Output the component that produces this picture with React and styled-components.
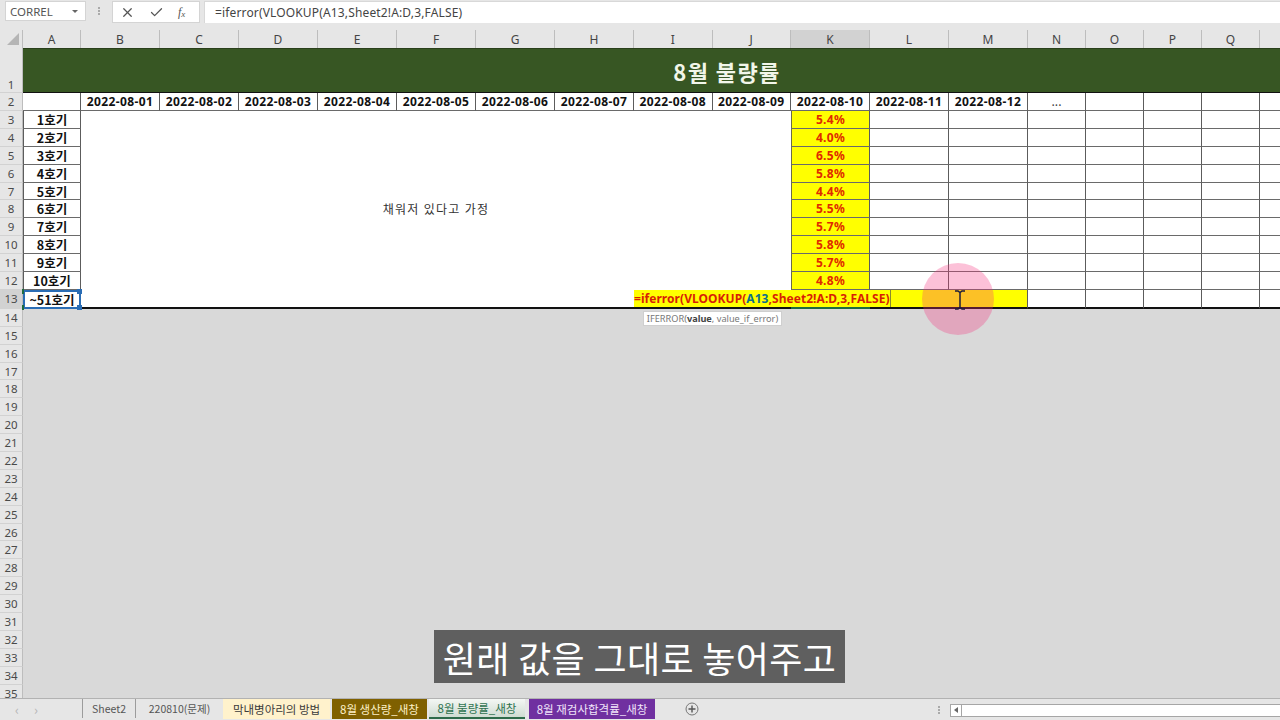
import styled, { createGlobalStyle } from 'styled-components';
import { FiX, FiCheck } from 'react-icons/fi';

const GlobalStyle = createGlobalStyle`
    html, body {
        margin: 0;
        padding: 0;
        background: #d9d9d9;
    }
    * {
        box-sizing: border-box;
    }
`;

const columns = [
    ['A', 58], ['B', 79], ['C', 79], ['D', 79], ['E', 79], ['F', 79], ['G', 79], ['H', 79], ['I', 78.5],
    ['J', 78.5], ['K', 79], ['L', 79], ['M', 79], ['N', 58], ['O', 58], ['P', 58], ['Q', 58], ['', 58],
];
const dates = ['01', '02', '03', '04', '05', '06', '07', '08', '09', '10', '11', '12'];
const rates = ['5.4%', '4.0%', '6.5%', '5.8%', '4.4%', '5.5%', '5.7%', '5.8%', '5.7%', '4.8%'];
const lowerRows = Array.from({ length: 22 }, (_, i) => i + 14);
const template = `23px ${columns.map((c) => `${c[1]}px`).join(' ')}`;

export default function App() {
    return (
        <Page>
            <GlobalStyle />
            <FormulaRow>
                <NameBox>
                    CORREL
                    <Caret />
                </NameBox>
                <Dots />
                <ActionBox>
                    <FiX size={15} />
                    <FiCheck size={15} />
                    <FxLabel>f<sub>x</sub></FxLabel>
                </ActionBox>
                <FormulaInput>=iferror(VLOOKUP(A13,Sheet2!A:D,3,FALSE)</FormulaInput>
            </FormulaRow>

            <Sheet>
                <Corner><CornerMark /></Corner>
                {columns.map((c) => (
                    <ColHead key={c[0]} $active={c[0] === 'K'}>{c[0]}</ColHead>
                ))}

                <RowNum $tall>1</RowNum>
                <TitleBand>8월 불량률</TitleBand>

                <RowNum>2</RowNum>
                <DateCell />
                {dates.map((d) => (
                    <DateCell key={d}>2022-08-{d}</DateCell>
                ))}
                <PlainCell $dots>...</PlainCell>
                <PlainCell />
                <PlainCell />
                <PlainCell />
                <PlainCell />

                <Merged>채워저 있다고 가정</Merged>
                {rates.map((rate, i) => (
                    <Row key={i} rowNo={i + 3} label={`${i + 1}호기`} rate={rate} />
                ))}

                <RowNum $active>13</RowNum>
                <SelectedCell>
                    ~51호기
                    <Handle $top $right />
                    <Handle $right />
                    <Handle $left $top $green />
                    <Handle $left $green />
                </SelectedCell>
                <EditCell>
                    <EditText>
                        =iferror(VLOOKUP(<RefText>A13</RefText>,Sheet2!A:D,3,FALSE)
                    </EditText>
                    <Tooltip>
                        IFERROR(<b>value</b>, value_if_error)
                    </Tooltip>
                </EditCell>
                <LastRowCell />
                <LastRowCell />
                <LastRowCell />
                <LastRowCell />
                <LastRowCell />

                <GrayArea />
                <KMark />
                {lowerRows.map((n) => (
                    <RowNum key={n}>{n}</RowNum>
                ))}
            </Sheet>

            <PointerHalo />
            <IBeam width="12" height="20" viewBox="0 0 12 20">
                <path d="M1 1h3l2 1.5L8 1h3M6 2.5v15M1 19h3l2-1.5L8 19h3" fill="none" stroke="#1c1c3a" strokeWidth="1.5" />
            </IBeam>
            <Caption>원래 값을 그대로 놓어주고</Caption>

            <TabBar>
                <NavArrows>
                    <span>‹</span>
                    <span>›</span>
                </NavArrows>
                <PlainTab $w={53}>Sheet2</PlainTab>
                <PlainTab $w={88}>220810(문제)</PlainTab>
                <ColorTab $bg="#fff2cc" $color="#3a3a3a" $w={107}>막내병아리의 방법</ColorTab>
                <ColorTab $bg="#7f6000" $color="#fdf0c8" $w={95}>8월 생산량_새창</ColorTab>
                <ActiveTab>8월 불량률_새창</ActiveTab>
                <ColorTab $bg="#7030a0" $color="#f0e4fa" $w={126}>8월 재검사합격률_새창</ColorTab>
                <AddSheet>
                    <svg width="14" height="14" viewBox="0 0 14 14">
                        <circle cx="7" cy="7" r="6" fill="none" stroke="#777" strokeWidth="1" />
                        <path d="M7 3.5v7M3.5 7h7" stroke="#555" strokeWidth="1.4" />
                    </svg>
                </AddSheet>
                <BarDots />
                <ScrollTrack>
                    <ScrollButton />
                </ScrollTrack>
            </TabBar>
        </Page>
    );
}

function Row({ rowNo, label, rate }) {
    return (
        <>
            <RowNum>{rowNo}</RowNum>
            <LabelCell>{label}</LabelCell>
            <RateCell>{rate}</RateCell>
            {[0, 1, 2, 3, 4, 5, 6].map((n) => (
                <PlainCell key={n} />
            ))}
        </>
    );
}

const Page = styled.div`
    width: 1280px;
    height: 720px;
    position: relative;
    overflow: hidden;
    display: flex;
    flex-direction: column;
    background: #d9d9d9;
    font-family: "Noto Sans", "Noto Sans CJK KR", sans-serif;
`;

const FormulaRow = styled.div`
    height: 30px;
    flex-shrink: 0;
    display: flex;
    align-items: flex-start;
    padding-top: 1px;
    padding-left: 5px;
    background: #e6e6e6;
`;

const NameBox = styled.div`
    width: 81px;
    height: 20px;
    padding: 0 5px 0 4px;
    display: flex;
    align-items: center;
    justify-content: space-between;
    background: #fff;
    border: 1px solid #d4d4d4;
    font-size: 11.5px;
    color: #555;
`;

const Caret = styled.span`
    width: 0;
    height: 0;
    margin-right: 2px;
    border-left: 3px solid transparent;
    border-right: 3px solid transparent;
    border-top: 3px solid #666;
`;

const Dots = styled.div`
    width: 2px;
    height: 8px;
    margin: 6px 12px 0 12px;
    background: repeating-linear-gradient(#aaa 0 2px, transparent 2px 3px);
`;

const ActionBox = styled.div`
    width: 88px;
    height: 22px;
    padding-left: 7px;
    margin-right: 4px;
    display: flex;
    align-items: center;
    gap: 14px;
    background: #fff;
    border: 1px solid #d4d4d4;
    color: #555;
`;

const FxLabel = styled.span`
    font-family: "Liberation Serif", serif;
    font-style: italic;
    font-size: 12px;
    line-height: 1;
    color: #555;

    sub {
        font-size: 9px;
        vertical-align: -1px;
    }
`;

const FormulaInput = styled.div`
    flex: 1;
    height: 22px;
    padding-left: 10px;
    display: flex;
    align-items: center;
    background: #fff;
    border-top: 1px solid #d8d8d8;
    border-left: 1px solid #d8d8d8;
    font-size: 12px;
    letter-spacing: 0.15px;
    color: #444;
`;

const Sheet = styled.div`
    display: grid;
    grid-template-columns: ${template};
    grid-template-rows: 18px 45px 18px repeat(10, 17.9px) 19px repeat(22, 17.9px);
    background: #fff;
    font-family: "Noto Sans CJK KR", "Noto Sans", sans-serif;
`;

const Corner = styled.div`
    position: relative;
    background: #e6e6e6;
    border-right: 1px solid #bdbdbd;
`;

const CornerMark = styled.div`
    position: absolute;
    right: 3px;
    bottom: 3px;
    width: 0;
    height: 0;
    border-left: 12px solid transparent;
    border-bottom: 12px solid #b5b5b5;
`;

const ColHead = styled.div`
    display: flex;
    align-items: center;
    justify-content: center;
    background: ${(p) => (p.$active ? '#d2d2d2' : '#e6e6e6')};
    border-right: 1px solid #bdbdbd;
    font-family: "Noto Sans", sans-serif;
    font-size: 12px;
    color: #444;
`;

const RowNum = styled.div`
    display: flex;
    align-items: ${(p) => (p.$tall ? 'flex-end' : 'center')};
    justify-content: center;
    background: ${(p) => (p.$active ? '#d2d2d2' : '#e6e6e6')};
    border-right: 1px solid #bdbdbd;
    border-bottom: 1px solid #d2d2d2;
    font-family: "Noto Sans", sans-serif;
    font-size: 11.5px;
    color: #4a4a4a;
`;

const TitleBand = styled.div`
    grid-column: 2 / -1;
    padding-left: 113px;
    display: flex;
    align-items: center;
    justify-content: center;
    background: #375623;
    border-top: 1px solid #2a3f1b;
    border-bottom: 1px solid #111;
    font-size: 22px;
    font-weight: 700;
    letter-spacing: 1.4px;
    color: #f2f6ea;
`;

const Cell = styled.div`
    display: flex;
    align-items: center;
    justify-content: center;
    border-right: 1px solid #5c5c5c;
    border-bottom: 1px solid #6a6a6a;
    font-size: 12px;
    color: #111;
`;

const DateCell = styled(Cell)`
    font-family: "Noto Sans", "Noto Sans CJK KR", sans-serif;
    font-weight: 700;
    font-size: 12px;
    letter-spacing: 0.4px;
`;

const PlainCell = styled(Cell)`
    color: #444;
    padding-bottom: ${(p) => (p.$dots ? '2px' : '0')};
`;

const LabelCell = styled(Cell)`
    font-weight: 700;
    font-size: 12.5px;
    border-left: 1px solid #5c5c5c;
`;

const RateCell = styled(Cell)`
    background: #ffff00;
    border-left: 1px solid #6a6a4a;
    font-family: "Noto Sans", sans-serif;
    font-weight: 700;
    font-size: 12px;
    letter-spacing: 0.3px;
    color: #e02a00;
`;

const Merged = styled(Cell)`
    grid-column: 3 / 12;
    grid-row: 4 / 15;
    font-weight: 400;
    color: #333;
    letter-spacing: 1.3px;
    border-right: none;
    border-bottom: 2px solid #111;
`;

const SelectedCell = styled(Cell)`
    position: relative;
    z-index: 2;
    border: 2px solid #2a6db5;
    font-weight: 700;
    font-size: 12.5px;
`;

const Handle = styled.span`
    position: absolute;
    width: 5px;
    height: 5px;
    background: ${(p) => (p.$green ? '#1e6b40' : '#2a6db5')};
    ${(p) => (p.$top ? 'top: -3px;' : 'bottom: -3px;')}
    ${(p) => (p.$left ? 'left: -3px;' : 'right: -3px;')}
    ${(p) => p.$green && 'width: 2px;'}
`;

const EditCell = styled.div`
    grid-column: 10 / 15;
    grid-row: 14;
    position: relative;
    z-index: 2;
    background: #ffff00;
    border-bottom: 2px solid #111;
    border-right: 1px solid #5c5c5c;
    font-family: "Noto Sans", sans-serif;
`;

const EditText = styled.div`
    width: 257px;
    height: 100%;
    display: flex;
    align-items: center;
    white-space: pre;
    border-right: 1px solid #8a8a30;
    font-weight: 700;
    font-size: 12px;
    letter-spacing: 0.05px;
    color: #d81e05;
`;

const RefText = styled.span`
    color: #0e6e8c;
`;

const Tooltip = styled.div`
    position: absolute;
    left: 9px;
    top: 21px;
    width: 139px;
    height: 15px;
    display: flex;
    align-items: center;
    justify-content: center;
    white-space: pre;
    background: #fff;
    border: 1px solid #cfcfcf;
    font-size: 9.2px;
    font-weight: 400;
    color: #777;

    b {
        color: #444;
    }
`;

const LastRowCell = styled(Cell)`
    border-bottom: 2px solid #111;
`;

const GrayArea = styled.div`
    grid-column: 2 / -1;
    grid-row: 15 / -1;
    background: #d9d9d9;
`;

const KMark = styled.div`
    grid-column: 12;
    grid-row: 14;
    align-self: end;
    height: 2px;
    z-index: 3;
    background: #1e6b40;
`;

const PointerHalo = styled.div`
    position: absolute;
    left: 922px;
    top: 263px;
    width: 72px;
    height: 72px;
    z-index: 4;
    border-radius: 50%;
    background: rgba(245, 50, 125, 0.3);
`;

const IBeam = styled.svg`
    position: absolute;
    left: 954px;
    top: 290px;
    z-index: 5;
`;

const Caption = styled.div`
    position: absolute;
    left: 434px;
    top: 630px;
    z-index: 6;
    width: 411px;
    height: 53px;
    display: flex;
    align-items: center;
    justify-content: center;
    white-space: pre;
    background: #5f5f5f;
    font-family: "Noto Sans CJK KR", sans-serif;
    font-size: 36px;
    letter-spacing: 0.35px;
    color: #fff;
`;

const TabBar = styled.div`
    position: absolute;
    left: 0;
    bottom: 0;
    z-index: 3;
    width: 100%;
    height: 22px;
    display: flex;
    align-items: flex-start;
    background: #e6e6e6;
    border-top: 1px solid #b2b2b2;
    font-family: "Noto Sans CJK KR", sans-serif;
    font-size: 11.5px;
`;

const NavArrows = styled.div`
    width: 82px;
    height: 20px;
    padding: 0 44px 0 15px;
    display: flex;
    align-items: center;
    justify-content: space-between;
    font-size: 13px;
    color: #b5b5b5;
`;

const PlainTab = styled.div`
    width: ${(p) => p.$w}px;
    height: 19px;
    display: flex;
    align-items: center;
    justify-content: center;
    border-left: 1px solid #9c9c9c;
    font-size: 10.5px;
    color: #555;
`;

const ColorTab = styled.div`
    width: ${(p) => p.$w}px;
    height: 20px;
    margin-right: 2px;
    display: flex;
    align-items: center;
    justify-content: center;
    background: ${(p) => p.$bg};
    color: ${(p) => p.$color};
`;

const ActiveTab = styled.div`
    width: 96px;
    height: 20px;
    margin-right: 4px;
    display: flex;
    align-items: center;
    justify-content: center;
    background: linear-gradient(#f4f7f4, #cfdcd2);
    border-bottom: 2px solid #2e6b4a;
    color: #2f7350;
`;

const AddSheet = styled.div`
    width: 14px;
    height: 14px;
    margin: 3px 0 0 28px;
    line-height: 0;
`;

const BarDots = styled.div`
    width: 2px;
    height: 8px;
    margin: 7px 0 0 239px;
    background: repeating-linear-gradient(#aaa 0 2px, transparent 2px 3px);
`;

const ScrollTrack = styled.div`
    flex: 1;
    height: 13px;
    margin: 5px 0 0 10px;
    display: flex;
    background: #fff;
    border: 1px solid #a6a6a6;
    border-right: none;
`;

const ScrollButton = styled.div`
    width: 11px;
    height: 100%;
    position: relative;
    border-right: 1px solid #a6a6a6;

    &::after {
        content: '';
        position: absolute;
        left: 3px;
        top: 2px;
        border-top: 3px solid transparent;
        border-bottom: 3px solid transparent;
        border-right: 4px solid #666;
    }
`;
